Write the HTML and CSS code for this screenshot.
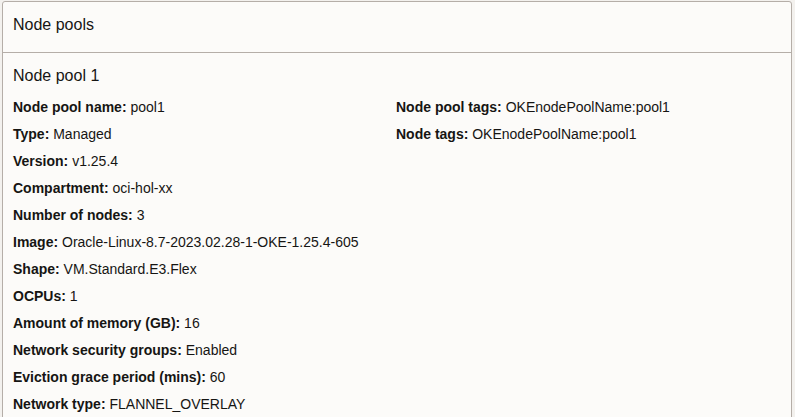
FILE: index.html
```html
<!DOCTYPE html>
<html>
<head>
<meta charset="utf-8">
<link rel="stylesheet" href="styles.css">
</head>
<body>
<div class="card">
  <div class="card-header">Node pools</div>
  <div class="card-body">
    <div class="pool-title">Node pool 1</div>
    <div class="cols">
      <div class="col">
        <div class="row"><b>Node pool name:</b> pool1</div>
        <div class="row"><b>Type:</b> Managed</div>
        <div class="row"><b>Version:</b> v1.25.4</div>
        <div class="row"><b>Compartment:</b> oci-hol-xx</div>
        <div class="row"><b>Number of nodes:</b> 3</div>
        <div class="row"><b>Image:</b> Oracle-Linux-8.7-2023.02.28-1-OKE-1.25.4-605</div>
        <div class="row"><b>Shape:</b> VM.Standard.E3.Flex</div>
        <div class="row"><b>OCPUs:</b> 1</div>
        <div class="row"><b>Amount of memory (GB):</b> 16</div>
        <div class="row"><b>Network security groups:</b> Enabled</div>
        <div class="row"><b>Eviction grace period (mins):</b> 60</div>
        <div class="row"><b>Network type:</b> FLANNEL_OVERLAY</div>
      </div>
      <div class="col">
        <div class="row"><b>Node pool tags:</b> OKEnodePoolName:pool1</div>
        <div class="row"><b>Node tags:</b> OKEnodePoolName:pool1</div>
      </div>
    </div>
  </div>
</div>
</body>
</html>
```
FILE: styles.css
```css
html, body {
  margin: 0;
  padding: 0;
  background: #f3f1ee;
}
html {
  height: 417px;
  overflow: hidden;
}
body {
  padding: 1px 3px 0 2px;
  font-family: "Liberation Sans", Arial, sans-serif;
  color: #161513;
  height: 416px;
  overflow: hidden;
}
.card {
  background: #fcfbf9;
  border: 1px solid #b5aea8;
  border-radius: 3px 3px 0 0;
  height: 430px;
}
.card-header {
  font-size: 16px;
  padding: 14px 10px 0 10px;
  height: 36px;
  border-bottom: 1px solid #b5aea8;
}
.card-body {
  padding: 14px 10px 0 10px;
}
.pool-title {
  font-size: 16px;
  line-height: 18px;
  margin-bottom: 14px;
}
.cols {
  display: grid;
  grid-template-columns: 383px 1fr;
}
.row {
  font-size: 14px;
  line-height: 17px;
  margin-bottom: 10px;
}
.row b {
  font-weight: bold;
}
```
